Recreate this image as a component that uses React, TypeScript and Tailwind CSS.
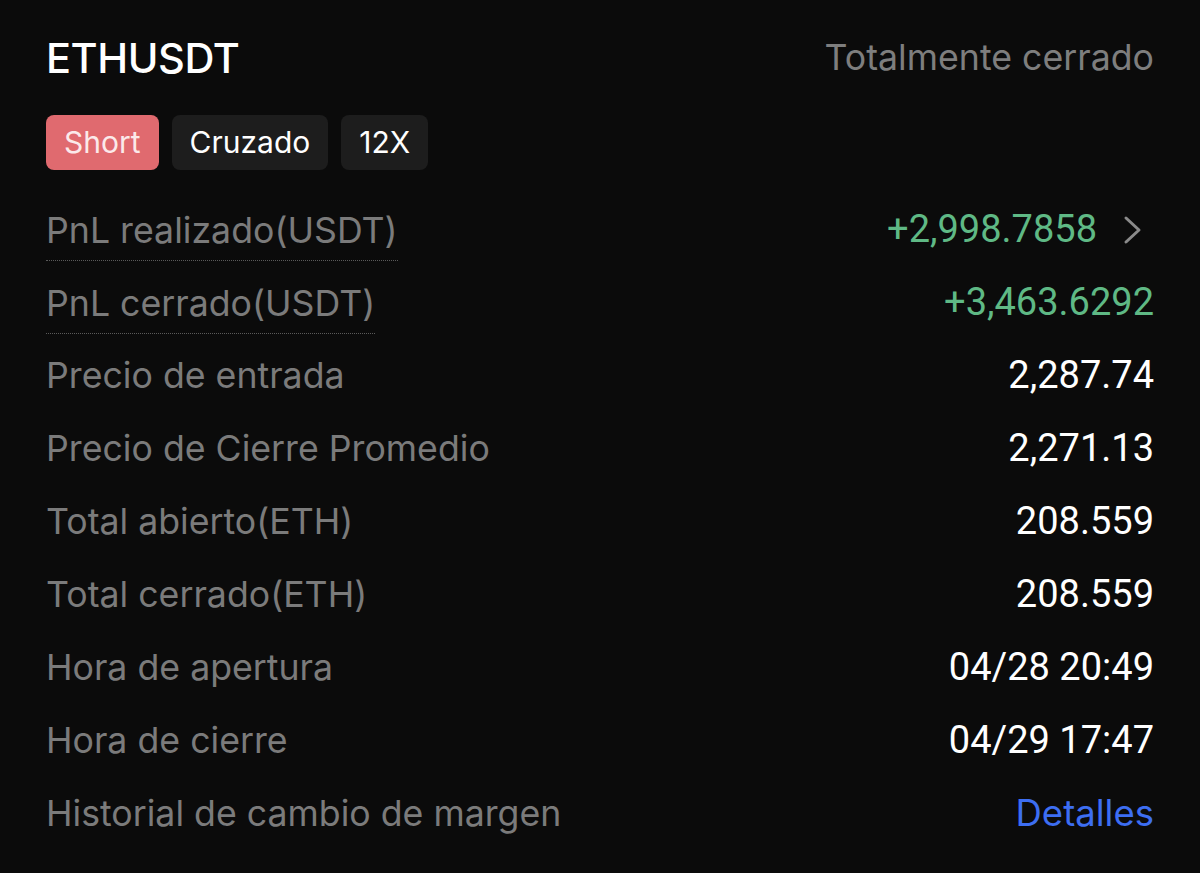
type Row = {
  label: string;
  value: string;
  tone?: 'green' | 'blue' | 'white';
  dotted?: boolean;
  chevron?: boolean;
};

const rows: Row[] = [
  { label: 'PnL realizado(USDT)', value: '+2,998.7858', tone: 'green', dotted: true, chevron: true },
  { label: 'PnL cerrado(USDT)', value: '+3,463.6292', tone: 'green', dotted: true },
  { label: 'Precio de entrada', value: '2,287.74' },
  { label: 'Precio de Cierre Promedio', value: '2,271.13' },
  { label: 'Total abierto(ETH)', value: '208.559' },
  { label: 'Total cerrado(ETH)', value: '208.559' },
  { label: 'Hora de apertura', value: '04/28 20:49' },
  { label: 'Hora de cierre', value: '04/29 17:47' },
  { label: 'Historial de cambio de margen', value: 'Detalles', tone: 'blue' },
];

const toneClass = {
  green: "font-['Roboto',sans-serif] text-[38px] text-[#5fb985]",
  blue: "font-['Inter',sans-serif] text-[36.5px] text-[#3d6ef2]",
  white: "font-['Roboto',sans-serif] text-[38px] text-white",
};

export default function App() {
  return (
    <div className="min-h-[873px] w-full bg-[#0b0b0b] px-[46px] pt-[34px] font-['Inter',sans-serif]">
      <div className="flex h-[48px] items-center justify-between">
        <h1 className="text-[41.5px] font-medium tracking-[-0.01em] text-white">ETHUSDT</h1>
        <span className="text-[35.7px] text-[#7e7e7e]">Totalmente cerrado</span>
      </div>

      <div className="mt-[33px] flex gap-[13px]">
        <span className="flex h-[55px] items-center rounded-[8px] bg-[#e06a6f] px-[18px] text-[30px] text-[#fbe9ea]">
          Short
        </span>
        <span className="flex h-[55px] items-center rounded-[8px] bg-[#1d1d1d] px-[18px] text-[30px] text-white">
          Cruzado
        </span>
        <span className="flex h-[55px] items-center rounded-[8px] bg-[#1d1d1d] px-[18px] text-[30px] text-white">
          12X
        </span>
      </div>

      <div className="mt-[23px]">
        {rows.map((r) => (
          <div key={r.label} className="flex h-[73px] items-center justify-between">
            <span
              className={
                'text-[35.7px] text-[#7b7b7b] ' +
                (r.dotted ? 'mt-[6px] border-b border-dotted border-[#5a5a5a] pb-[2px]' : '')
              }
            >
              {r.label}
            </span>
            <span className="flex items-center">
              <span className={toneClass[r.tone ?? 'white']}>{r.value}</span>
              {r.chevron && (
                <svg viewBox="0 0 20 30" className="ml-[26px] mr-[11px] h-[30px] w-[20px]" fill="none">
                  <polyline
                    points="3,3 16,15 3,27"
                    stroke="#8a8a8a"
                    strokeWidth="3"
                    strokeLinecap="round"
                    strokeLinejoin="round"
                  />
                </svg>
              )}
            </span>
          </div>
        ))}
      </div>
    </div>
  );
}
